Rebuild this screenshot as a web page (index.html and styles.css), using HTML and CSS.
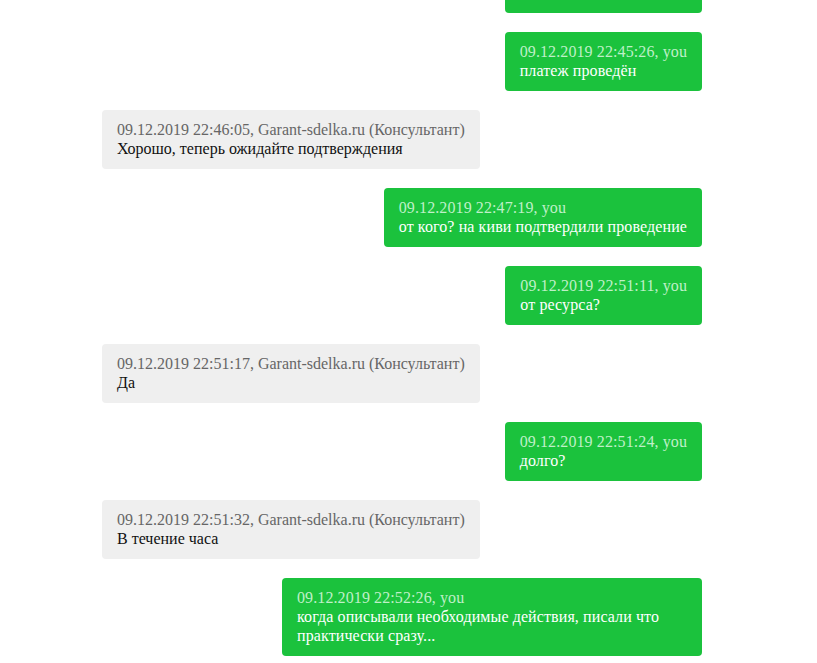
FILE: index.html
```html
<!DOCTYPE html>
<html lang="ru">
<head>
<meta charset="utf-8">
<link rel="stylesheet" href="styles.css">
</head>
<body>
<div class="chat">
  <div class="msg out"><div class="meta">09.12.2019 22:45:01, you</div><div class="text">оплатил</div></div>
  <div class="msg out"><div class="meta">09.12.2019 22:45:26, you</div><div class="text">платеж проведён</div></div>
  <div class="msg in"><div class="meta">09.12.2019 22:46:05, Garant-sdelka.ru (Консультант)</div><div class="text">Хорошо, теперь ожидайте подтверждения</div></div>
  <div class="msg out"><div class="meta">09.12.2019 22:47:19, you</div><div class="text">от кого? на киви подтвердили проведение</div></div>
  <div class="msg out"><div class="meta">09.12.2019 22:51:11, you</div><div class="text">от ресурса?</div></div>
  <div class="msg in"><div class="meta">09.12.2019 22:51:17, Garant-sdelka.ru (Консультант)</div><div class="text">Да</div></div>
  <div class="msg out"><div class="meta">09.12.2019 22:51:24, you</div><div class="text">долго?</div></div>
  <div class="msg in"><div class="meta">09.12.2019 22:51:32, Garant-sdelka.ru (Консультант)</div><div class="text">В течение часа</div></div>
  <div class="msg out"><div class="meta">09.12.2019 22:52:26, you</div><div class="text">когда описывали необходимые действия, писали что практически сразу...</div></div>
</div>
</body>
</html>
```
FILE: styles.css
```css
html, body {
  margin: 0;
  padding: 0;
  background: #fff;
  overflow: hidden;
}
body {
  font-family: "Liberation Serif", "Times New Roman", serif;
  font-size: 16px;
  line-height: 19px;
}
.chat {
  width: 600px;
  margin-left: 102px;
  margin-top: -46px;
  display: flex;
  flex-direction: column;
  gap: 19px;
}
.msg {
  max-width: 420px;
  box-sizing: border-box;
  padding: 10px 15px 11px;
  border-radius: 4px;
}
.out {
  align-self: flex-end;
  background: #1bc23d;
  color: #fff;
  letter-spacing: 0.1px;
}
.out .meta {
  color: #bff0c8;
}
.in {
  align-self: flex-start;
  background: #efefef;
  color: #111;
}
.in .meta {
  color: #666;
}
```
